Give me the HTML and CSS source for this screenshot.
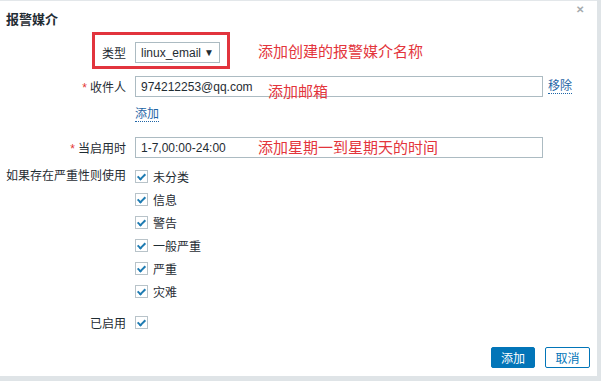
FILE: index.html
```html
<!DOCTYPE html>
<html lang="zh-CN">

<head>
    <meta charset="UTF-8">
    <meta name="viewport" content="width=device-width, initial-scale=1.0">
    <title>报警媒介</title>
    <link rel="stylesheet" href="styles.css">
</head>

<body>
    <div class="dialog">
        <header class="dialog-head">
            <h4>报警媒介</h4>
            <span class="close">&#x2715;</span>
        </header>

        <div class="form">
            <div class="row">
                <label class="label">类型</label>
                <div class="field">
                    <div class="select">linux_email <span class="arrow">&#9660;</span></div>
                </div>
            </div>
            <div class="row row-sendto">
                <label class="label"><span class="req">*</span>收件人</label>
                <div class="field">
                    <input type="text" class="text-box" value="974212253@qq.com">
                    <a class="link">移除</a>
                </div>
            </div>
            <div class="row row-add">
                <span class="label"></span>
                <div class="field"><a class="link">添加</a></div>
            </div>
            <div class="row row-period">
                <label class="label"><span class="req">*</span>当启用时</label>
                <div class="field">
                    <input type="text" class="text-box" value="1-7,00:00-24:00">
                </div>
            </div>
            <div class="row row-severity">
                <label class="label">如果存在严重性则使用</label>
                <ul class="checks">
                    <li><span class="check"></span>未分类</li>
                    <li><span class="check"></span>信息</li>
                    <li><span class="check"></span>警告</li>
                    <li><span class="check"></span>一般严重</li>
                    <li><span class="check"></span>严重</li>
                    <li><span class="check"></span>灾难</li>
                </ul>
            </div>
            <div class="row row-enabled">
                <label class="label">已启用</label>
                <div class="field"><span class="check"></span></div>
            </div>
        </div>

        <footer class="dialog-foot">
            <button class="btn btn-primary">添加</button>
            <button class="btn btn-alt">取消</button>
        </footer>

        <!-- annotations drawn over the screenshot -->
        <div class="mark-box"></div>
        <span class="note note-type">添加创建的报警媒介名称</span>
        <span class="note note-mail">添加邮箱</span>
        <span class="note note-period">添加星期一到星期天的时间</span>
    </div>
</body>

</html>
```

FILE: styles.css
```css
/* General */
body {
    margin: 0;
    padding: 0;
    background: #dfe4e7;
    font-family: "Liberation Sans", Arial, "Noto Sans CJK SC", sans-serif;
    font-size: 12px;
    color: #1f2c33;
}

.dialog {
    position: relative;
    width: 597px;
    height: 376px;
    background: #fff;
    border-top: 1px solid #e3e7ea;
    box-sizing: border-box;
}

/* Header */
.dialog-head {
    display: flex;
    justify-content: space-between;
    align-items: center;
    height: 35px;
    padding: 0 13px 0 6px;
}

.dialog-head h4 {
    margin: 0;
    font-size: 13px;
    font-weight: bold;
    color: #1f2c33;
}

.close {
    align-self: flex-start;
    margin-top: 3px;
    font-size: 10px;
    font-weight: bold;
    color: #a5aaad;
}

/* Form */
.form {
    padding-top: 6px;
}

.row {
    display: flex;
    align-items: center;
}

.label {
    width: 135px;
    flex-shrink: 0;
    text-align: right;
    padding-right: 9px;
    box-sizing: border-box;
    white-space: nowrap;
    color: #1f2c33;
}

.req {
    color: #e33734;
    margin-right: 3px;
}

.field {
    display: flex;
    align-items: center;
}

.select {
    width: 85px;
    height: 21px;
    border: 1px solid #acbbc2;
    box-sizing: border-box;
    padding: 0 5px 0 5px;
    display: flex;
    align-items: center;
    justify-content: space-between;
    font-size: 12px;
    color: #1f2c33;
}

.arrow {
    font-size: 10px;
}

.text-box {
    width: 408px;
    height: 21px;
    margin: 0;
    border: 1px solid #acbbc2;
    box-sizing: border-box;
    padding: 0 5px;
    font-family: "Liberation Sans", Arial, sans-serif;
    font-size: 12px;
    color: #1f2c33;
    outline: none;
}

.link {
    color: #1f65a6;
    border-bottom: 1px dotted #1f65a6;
    line-height: 14px;
    cursor: pointer;
}

.row-sendto {
    margin-top: 13px;
}

.row-sendto .link {
    margin-left: 5px;
}

.row-add {
    margin-top: 10px;
}

.row-period {
    margin-top: 15px;
}

.row-severity {
    align-items: flex-start;
    margin-top: 7px;
}

.row-severity .label {
    line-height: 23px;
}

.checks {
    list-style: none;
    margin: 0;
    padding: 0;
}

.checks li {
    display: flex;
    align-items: center;
    height: 23px;
}

.check {
    position: relative;
    width: 13px;
    height: 13px;
    margin-right: 5px;
    border: 1px solid #b8c3c9;
    box-sizing: border-box;
    background: #fff;
}

.check::after {
    content: "";
    position: absolute;
    left: 3px;
    top: 1px;
    width: 3px;
    height: 6px;
    border: solid #1e7bb2;
    border-width: 0 2px 2px 0;
    transform: rotate(45deg);
}

.row-enabled {
    margin-top: 8px;
    height: 23px;
}

/* Footer */
.dialog-foot {
    position: absolute;
    right: 7px;
    bottom: 8px;
    display: flex;
    gap: 10px;
}

.btn {
    height: 21px;
    padding: 0 9px;
    font-family: "Noto Sans CJK SC", sans-serif;
    font-size: 12px;
    border-radius: 2px;
    box-sizing: border-box;
}

.btn-primary {
    width: 44px;
    background: #0275b8;
    border: 1px solid #0275b8;
    color: #fff;
}

.btn-alt {
    width: 45px;
    background: #fff;
    border: 1px solid #0275b8;
    color: #0275b8;
}

/* Annotations */
.mark-box {
    position: absolute;
    left: 92px;
    top: 31px;
    width: 138px;
    height: 37px;
    border: 3px solid #e2343d;
    box-sizing: border-box;
}

.note {
    position: absolute;
    font-family: "Noto Sans CJK SC", sans-serif;
    font-size: 15px;
    color: #e3353c;
    line-height: 17px;
}

.note-type {
    left: 258px;
    top: 41px;
}

.note-mail {
    left: 268px;
    top: 81px;
}

.note-period {
    left: 258px;
    top: 137px;
}
```
